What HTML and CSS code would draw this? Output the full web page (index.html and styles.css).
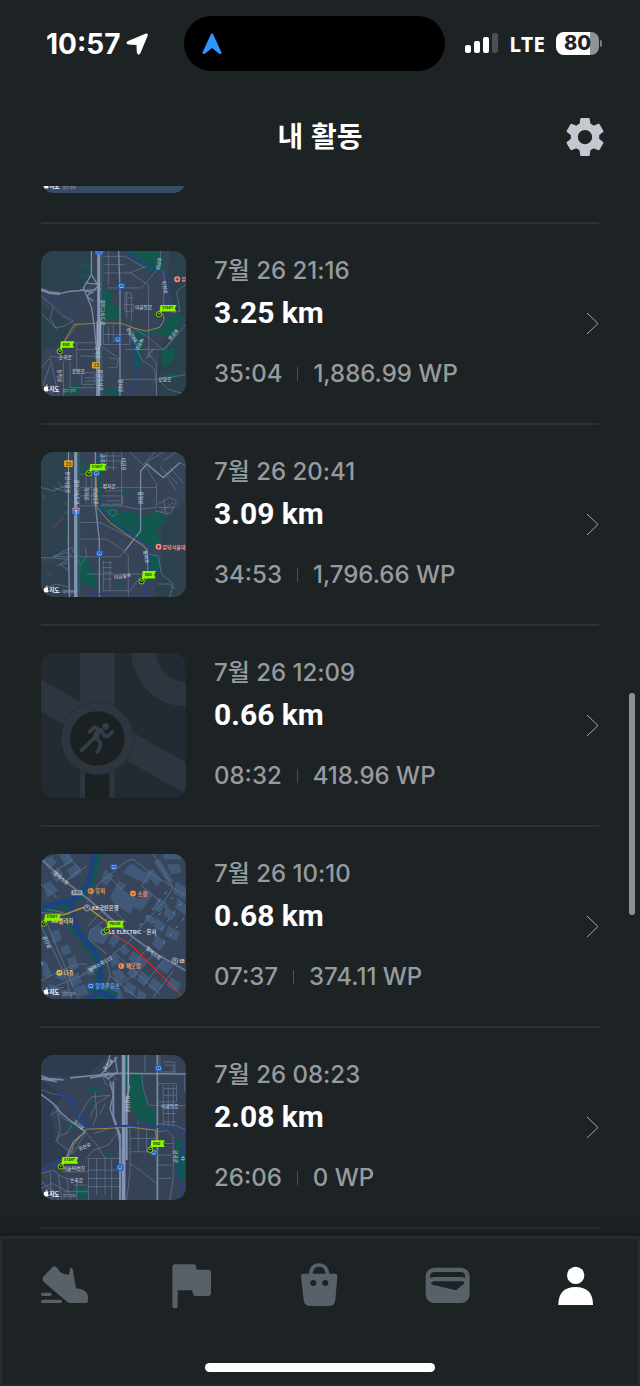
FILE: index.html
```html
<!DOCTYPE html>
<html lang="ko">
<head>
<meta charset="utf-8">
<meta name="viewport" content="width=device-width, initial-scale=1">
<title>내 활동</title>
<link rel="stylesheet" href="styles.css">
</head>
<body>
<svg class="sprites" aria-hidden="true">
  <defs>
    <g id="pin">
      <path d="M5-28H53L48-18 52-8H10L0 2Z" fill="#8cf500"/>
      <circle r="8" fill="#14200e" stroke="#7fe000" stroke-width="3"/>
      <path d="M-3-4L0 1 5-4" fill="none" stroke="#8cf500" stroke-width="3"/>
    </g>
    <g id="station">
      <rect x="-11" y="-10" width="22" height="20" rx="6" fill="#2458ae"/>
      <rect x="-7" y="-6" width="14" height="12" rx="4" fill="#78b2ff"/>
      <path d="M-3 3V-2H3V3" fill="none" stroke="#173a78" stroke-width="3"/>
    </g>
    <g id="maplogo">
      <path d="M0-6C4-8 9-7 10-4 7-2 8 2 11 3 9 8 7 9 4 8 1 9-2 8-4 3-5-2-3-6 0-6ZM3-8C3-11 5-12 7-13 7-10 6-8 3-8Z" fill="#fff"/>
      <text class="map-brand" x="12" y="8">지도</text>
      <text class="map-legal" x="53" y="9">법적 정보</text>
    </g>
  </defs>
</svg>

<div class="screen">
  <div class="status">
    <div class="status-left">
      <span class="clock">10:57</span>
      <svg class="location" viewBox="0 0 22 22"><path d="M20 .5Q22.500 0 21.500 3L14.500 20Q12.500 23.500 10.800 19.500L10.500 12 2.500 11.500Q-1.500 10 2 8Z" fill="#fff"/></svg>
    </div>
    <div class="island">
      <svg class="nav-arrow" viewBox="0 0 20 22"><path d="M9 1Q10-.5 11 1L19.500 19.500Q19.500 21.500 17.500 21L10 15 2.500 21Q.5 21.500.5 19.500Z" fill="#2f95ff"/></svg>
    </div>
    <div class="status-right">
      <svg class="signal" viewBox="0 0 33 21"><g fill="#fff"><rect y="12" width="6" height="8" rx="2"/><rect x="9" y="8" width="6" height="12" rx="2"/><rect x="18" y="4" width="6" height="16" rx="2"/></g><rect x="27" width="6" height="20" rx="2" fill="#4b4f51"/></svg>
      <span class="carrier">LTE</span>
      <span class="battery"><span class="battery-body">80</span><span class="battery-tip"></span></span>
    </div>
  </div>

  <header class="header">
    <h1 class="title">내 활동</h1>
    <button class="settings" type="button" aria-label="설정">
      <svg viewBox="2.400 2.400 19.200 19.200"><path fill="#c5c8d0" d="M19.140 12.940c.04-.3.06-.61.06-.94 0-.32-.02-.64-.07-.94l2.030-1.580c.18-.14.23-.41.12-.61l-1.920-3.320c-.12-.22-.37-.29-.59-.22l-2.390.96c-.5-.38-1.030-.7-1.620-.94l-.36-2.540c-.04-.24-.24-.41-.48-.41h-3.840c-.24 0-.43.17-.47.41l-.36 2.540c-.59.24-1.130.57-1.620.94l-2.390-.96c-.22-.08-.47 0-.59.22L2.740 8.870c-.12.21-.08.47.12.61l2.030 1.580c-.05.3-.09.63-.09.94s.02.64.07.94l-2.030 1.580c-.18.14-.23.41-.12.61l1.920 3.320c.12.22.37.29.59.22l2.390-.96c.5.38 1.030.7 1.620.94l.36 2.540c.05.24.24.41.48.41h3.840c.24 0 .44-.17.47-.41l.36-2.540c.59-.24 1.130-.56 1.620-.94l2.390.96c.22.08.47 0 .59-.22l1.920-3.320c.12-.22.07-.47-.12-.61l-2.010-1.580zM12 15.600c-1.980 0-3.600-1.620-3.600-3.600s1.620-3.600 3.600-3.600 3.600 1.620 3.600 3.600-1.620 3.600-3.600 3.600z"/></svg>
    </button>
  </header>

  <main class="feed">
    <div class="previous">
      <svg class="thumb" viewBox="33 29 435 436"><rect x="33" y="29" width="435" height="436" fill="#384b65"/><use href="#maplogo" x="45" y="443"/></svg>
    </div>
    <ul class="list">
      <li class="row"><a class="activity" href="#run-1">
        <svg class="thumb" viewBox="33 29 435 436" role="img" aria-label="경로 지도">
          <rect x="33" y="29" width="435" height="436" fill="#374356"/>
          <path fill="#2b414d" d="M33 29H180L190 120 150 145 85 150 33 135ZM33 190L75 215 130 255 90 310 33 330ZM420 29H468V230L440 220 410 130ZM395 300L468 250V465H370Z"/>
          <g fill="#12584f">
            <path d="M285 29H400L405 85 365 95 320 60ZM220 145L240 150 245 185 268 200V238H222ZM305 270L350 265 400 258 412 230 440 220 465 230 430 280 400 285 380 275 340 285 330 380 312 385ZM395 330L432 320 438 345 410 380 395 370ZM115 432H155L145 460H100ZM235 440L260 445V465H225ZM400 400L440 395 440 410H400Z"/>
            <path d="M140 70L170 62 185 75 178 90 150 82ZM145 98L180 95 185 112 150 112Z" opacity=".6"/>
          </g>
          <g fill="none" stroke="#24418a" stroke-width="5">
            <path d="M285 29L330 60 400 95 418 110 412 180 405 240 370 262 325 290 312 310 325 400 300 465"/>
            <path d="M60 175L100 190 125 210 135 240" stroke-width="3"/>
          </g>
          <g class="roads">
            <path d="M220 95H300L355 130 357 340 380 365V465M218 45H285L345 80M220 70H285M235 29V130M300 95L350 75M230 140H335L390 75 392 29M400 90L405 130 400 190 430 215 450 210 440 150 468 130M33 165L70 195 100 225 130 240 100 255 75 260 33 215M70 195L60 230 80 265M140 250L105 300 140 305V400M140 305H195M60 345L95 350 130 345M33 380L60 350 85 465M60 370L40 430 70 465M140 325H195M150 345H195M160 395H195V430H155V400M165 410H195M165 420H195M100 360V465M120 360V440H195M215 315L270 355M220 250V310H300V250M235 255V305M250 250V305M218 280H300M285 325H405L468 250M320 325L335 355 375 385 380 465M270 415H330L390 415 468 400M310 270L320 320M300 255L350 285 400 325 440 280M290 150V230M290 170H310M282 190H310V210H285V155H305V240M350 345L370 325 350 350 365 345M385 415L415 445 468 460M235 350L265 355 260 380H235"/>
          </g>
          <g class="roads wide">
            <path d="M184 29V100L160 140 185 200 193 260 200 330V465M184 100L215 150M150 145L190 155M165 125L210 130 170 165 190 180"/>
            <path d="M266 29L270 150V465"/>
            <path d="M33 145L60 155 90 157" stroke-width="8"/><path d="M90 157L120 150 200 145"/>
          </g>
          <path d="M215 29V465" fill="none" stroke="#236255" stroke-width="5"/>
          <path d="M206 29V465" fill="none" stroke="#8295b4" stroke-width="9"/>
          <path d="M202 240V315M211 240V315" stroke="#95a5c2" stroke-width="5"/>
          <path class="route" d="M90 330L108 290 132 250 205 246H272L310 260 350 270 390 258 403 235 400 220 387 218"/>
          <g class="map-label">
            <text transform="translate(212 175) rotate(90)">경부고속도로</text><text transform="translate(206 385) rotate(90)">분당수서로</text>
            <text transform="translate(198 315) rotate(90)">정자로</text><text x="315" y="203">미금일로</text><text transform="translate(288 262) rotate(60)">성남대로</text>
            <text transform="translate(332 290) rotate(115)">백현로</text><text transform="translate(396 120) rotate(80)">탄천로</text><text transform="translate(422 298) rotate(-50)">판교로</text>
            <text x="126" y="397">운전로</text><text x="86" y="353">손곡로</text><text transform="translate(84 385) rotate(90)">동막로</text><text transform="translate(268 415) rotate(90)">장미로</text><text x="386" y="420">분당로</text><text transform="translate(388 88) rotate(-80)">성남로</text>
          </g>
          <rect x="195" y="25" width="25" height="15" rx="5" fill="#3775df"/><rect x="186" y="363" width="24" height="19" rx="3" fill="#e0a51d"/><text class="shield dark" x="190" y="378">23</text>
          <use href="#station" x="274" y="134"/><use href="#station" x="264" y="295"/>
          <circle cx="442" cy="114" r="9" fill="#ff8c88"/><path d="M437 114H447M442 109V119" stroke="#8a2430" stroke-width="3"/><text class="poi red" x="455" y="120">분</text>
          <use href="#pin" x="387" y="219"/><text class="pin-text" x="397" y="203">START</text>
          <g transform="translate(89 331)"><path d="M3-31H44L39-21 43-11H8L0 2Z" fill="#8cf500"/><circle r="8" fill="#14200e" stroke="#7fe000" stroke-width="3"/><path d="M-3-4L0 1 5-4" fill="none" stroke="#8cf500" stroke-width="3"/></g><text class="pin-text" x="98" y="314">END</text>
          <use href="#maplogo" x="45" y="443"/>
        </svg>
        <div class="info"><p class="date">7월 26 21:16</p><h2 class="distance">3.25 km</h2><p class="stats"><span>35:04</span><i class="bar"></i><span>1,886.99 WP</span></p></div>
        <svg class="chevron" viewBox="0 0 13 23"><path d="M1 1L12 11.500 1 22"/></svg>
      </a></li>

      <li class="row"><a class="activity" href="#run-2">
        <svg class="thumb" viewBox="33 33 435 436" role="img" aria-label="경로 지도">
          <rect x="33" y="33" width="435" height="436" fill="#374356"/>
          <path fill="#2e414e" d="M33 33H115V340L80 360 33 350ZM395 235L468 180V469H370L395 350ZM33 370L115 360V469H33Z"/>
          <path fill="#345548" d="M33 155L45 170 40 185ZM100 215L115 205V225ZM100 290L115 300V310ZM45 390L65 400 60 410ZM95 180L115 188V198Z"/>
          <g fill="#12584f"><path d="M152 60H168V90H152ZM203 40H216V210H203ZM212 198L250 195 270 215 300 210 350 230 385 205 412 240 378 265 395 300 378 330 355 315 310 290 240 245ZM150 350L170 350 190 400 205 445 170 435 148 410ZM360 340L395 350 390 380 355 430 345 395ZM270 150L290 155 280 165ZM300 148L318 152 310 163ZM255 430L280 432 270 442Z"/></g>
          <g class="roads">
            <path d="M150 140H380M275 33V195M300 33L350 80 380 130V200L330 205 270 195H150M215 60H275M215 80H260M215 45H270M230 33V90M250 33V90M215 165H278V190H215M225 150H275M230 180H275M150 245H210L260 270 340 310 355 340M332 140V270L285 330 270 348H70L110 335 125 345M400 110L360 75 350 60 375 33M400 110L450 65 468 75M355 60L400 33M390 75L440 150M405 90L445 130M420 80L460 125M400 60L440 33M385 190L420 170 440 180 420 220 375 210M400 175L410 225M385 200H435M390 215L430 185M150 295H230L275 325 295 345V469M165 320L170 345 150 375M220 360V450M240 360V450M218 365H245M218 380H245M218 395H245M218 415H245M170 400H340M215 450H300L330 410M355 340L385 345 395 400 430 430 420 469M385 430H420L435 445M33 140L70 150 115 130M70 140L115 155M85 125L105 145M33 350L115 355 90 370 115 390M65 350L125 320 150 375M80 375L115 365V395M50 440L80 430 115 440M85 455L150 450M235 210Q265 200 260 220 240 235 235 210M168 100V190M185 85V190M150 165H200M150 100H170"/>
          </g>
          <g class="roads wide"><path d="M115 33V320L118 469M196 33V190L208 300V469M332 150V90L350 70M345 65L400 110 450 65M332 150V270L285 330"/></g>
          <path d="M148 33V469" fill="none" stroke="#236255" stroke-width="5"/><path d="M137 33V469" fill="none" stroke="#8295b4" stroke-width="10"/>
          <path d="M207 33V195L225 220 300 280 355 315V390L340 469" fill="none" stroke="#24418a" stroke-width="5"/><path d="M33 405L42 435M170 460H240" fill="none" stroke="#24418a" stroke-width="4"/>
          <path class="route" d="M198 98L201 200 240 245 310 295 352 325 354 400 345 420"/>
          <path d="M65 265L100 230" stroke="#5b413f" stroke-width="5"/>
          <g class="map-label"><text transform="translate(109 92) rotate(90)">용인서울로</text><text transform="translate(136 115) rotate(90)">경부고속도로</text><text transform="translate(166 140) rotate(90)">정자로</text><text transform="translate(192 140) rotate(90)">성남대로</text><text transform="translate(213 38) rotate(90)">금곡로</text><text transform="translate(276 50) rotate(90)">미금로</text><text x="218" y="141">정자로</text><text transform="translate(328 152) rotate(90)">불정로</text><text transform="translate(340 330) rotate(80)">돌마로</text><text transform="translate(253 416) rotate(-8)">미금일로</text></g>
          <rect x="102" y="58" width="26" height="20" rx="3" fill="#e0a51d"/><text class="shield dark" x="106" y="74">23</text>
          <path d="M126 203H150V218L138 224 126 218Z" fill="#3b78dc"/><path d="M126 203H150" stroke="#d27378" stroke-width="5"/><text class="shield" x="134" y="219">1</text>
          <use href="#station" x="199" y="97"/><use href="#station" x="208" y="338"/>
          <circle cx="386" cy="318" r="9" fill="#ff8c88"/><path d="M381 318H391M386 313V323" stroke="#8a2430" stroke-width="3"/><text class="poi red" x="398" y="324">분당서울대</text>
          <use href="#pin" x="176" y="97"/><text class="pin-text" x="185" y="82">START</text>
          <g transform="translate(335 422)"><path d="M3-31H43L38-20 42-9H9L0 2Z" fill="#8cf500"/><circle r="8" fill="#14200e" stroke="#7fe000" stroke-width="3"/><path d="M-3-4L0 1 5-4" fill="none" stroke="#8cf500" stroke-width="3"/></g><text class="pin-text" x="345" y="406">END</text>
          <use href="#maplogo" x="45" y="447"/>
        </svg>
        <div class="info"><p class="date">7월 26 20:41</p><h2 class="distance">3.09 km</h2><p class="stats"><span>34:53</span><i class="bar"></i><span>1,796.66 WP</span></p></div>
        <svg class="chevron" viewBox="0 0 13 23"><path d="M1 1L12 11.500 1 22"/></svg>
      </a></li>

      <li class="row"><a class="activity" href="#run-3">
        <svg class="thumb" viewBox="33 30 435 436" role="img" aria-label="지도 없음">
          <rect x="33" y="30" width="435" height="436" fill="#232a32"/>
          <g fill="#2d353f"><path d="M150 30H253V466H150Z"/><path d="M33 110L468 359V454L33 206Z"/><path d="M305 30H380A88 88 0 0 0 468 117V190A163 163 0 0 1 305 30Z"/></g>
          <path d="M165 370H238V466H165Z" fill="#1b2023"/>
          <circle cx="202" cy="287" r="112" fill="#242c34" opacity=".55"/>
          <circle cx="202" cy="287" r="95" fill="#1b2023" stroke="#2d353f" stroke-width="26"/>
          <g fill="none" stroke="#343d48" stroke-width="11" stroke-linecap="round" stroke-linejoin="round"><path d="M179 267L193 253 211 261 199 281 183 295 155 322"/><path d="M213 261L223 279 235 279 247 267M199 285L211 299 210 313 202 327"/><path d="M205 265L195 285" stroke-width="18"/></g><circle cx="227" cy="251" r="10" fill="#343d48"/>
        </svg>
        <div class="info"><p class="date">7월 26 12:09</p><h2 class="distance">0.66 km</h2><p class="stats"><span>08:32</span><i class="bar"></i><span>418.96 WP</span></p></div>
        <svg class="chevron" viewBox="0 0 13 23"><path d="M1 1L12 11.500 1 22"/></svg>
      </a></li>

      <li class="row"><a class="activity" href="#run-4">
        <svg class="thumb" viewBox="33 29 435 436" role="img" aria-label="경로 지도">
          <rect x="33" y="29" width="435" height="436" fill="#37455b"/>
          <g fill="#405979">
            <path d="M40 45L65 35 80 55 55 75ZM85 29H120L130 50 105 65ZM60 85L85 70 100 90 80 115ZM110 75L140 60 155 85 125 105ZM40 120L60 110 85 140 50 160ZM225 75L250 95 230 125 212 110ZM295 65L310 60 365 100 350 120 280 85ZM265 110L290 120 275 140 330 165 350 135 370 150 335 200 310 190 300 210 255 180 240 160ZM345 85L370 75 395 110 380 125ZM370 50L390 45 430 110 415 120ZM410 60H450L455 85 425 90ZM400 29H455V45H400ZM440 110L468 130V170L430 145ZM385 160L410 175 390 205 370 190ZM410 185L440 210 425 230 400 210ZM445 160L468 180V215L435 190ZM350 210L375 220 365 240 345 230ZM380 220L410 245 395 265 370 245ZM415 245L450 265 440 290 405 275ZM380 275L410 290 390 320 365 300ZM180 255L210 245 240 270 220 300 180 290ZM250 265L270 285 250 310 235 295ZM280 300L300 320 285 335 270 320ZM310 320L350 350 330 375 295 345ZM240 335L260 330 270 355 245 370ZM245 380L270 375 290 400 260 420ZM300 370L325 380 315 405 290 390ZM335 380L360 400 345 425 320 410ZM370 400L400 425 380 445 355 430ZM290 410L320 430 310 455 280 440ZM240 430L270 435 280 465H250ZM325 435L350 450 345 465H320ZM45 215H90V235H45ZM60 265L85 255 95 285 70 300ZM90 310L115 300 125 325 100 335ZM110 345L135 335 145 370 120 380ZM80 375L110 390 100 410 75 400ZM110 400L145 385 155 415 125 430ZM135 430L165 420 175 450 145 460ZM165 370L195 360 200 390 175 395ZM35 350L50 355 65 395 40 400ZM55 420L80 425 85 450H60ZM90 440L120 435 125 460H95ZM400 345L430 365 410 390 380 370ZM425 400L455 420 440 445 410 425Z"/>
          </g>
          <g fill="none" stroke="#125653" stroke-width="27"><path d="M33 195L125 170 160 145 182 110 200 29M122 170L118 205 135 255 190 320 208 365 205 465M205 435L260 460"/></g>
          <g fill="none" stroke="#213e86" stroke-width="13"><path d="M33 190L122 168 155 145 178 105 190 29M125 168L125 205 145 265 195 325 210 370V445L255 465M200 450L175 465"/></g>
          <g class="roads streets"><path d="M33 45L110 115 175 165 245 225 310 280 380 330 468 380M33 245L90 360 110 410 125 465M45 225L95 345 145 465M170 175L205 120 290 50 310 45 360 85 430 130 400 175 335 245 300 290M235 95L290 150M175 245L220 195 235 220 180 260 175 285 230 330M240 190L290 235M365 80L335 125 390 170M310 280L275 310 225 350 155 390M230 350L240 390 225 440M260 330L300 370 390 450M240 395L320 460M345 320L315 360M370 330L320 390 250 430M400 350L340 425M430 380L370 460M33 120L80 160M65 85L125 50M100 115L170 65M105 29L150 75 110 110M33 205L120 210M50 195L100 205M33 410L90 380 145 360 170 360M80 425L180 385M33 440L100 430M430 130L468 155M370 29L430 130"/></g>
          <path d="M33 45L110 115 175 165 245 225 310 280 380 330 468 380" fill="none" stroke="#66758d" stroke-width="6"/>
          <path d="M330 245L420 130M350 260L440 145M375 280L460 170M400 300L468 215" stroke="#74839d" stroke-width="3" stroke-dasharray="10 20" fill="none"/>
          <path d="M40 239L70 214 100 212 160 190 180 195 230 232 235 257" fill="none" stroke="#c39328" stroke-width="4"/><path d="M230 258L300 300 455 453" fill="none" stroke="#f02b26" stroke-width="3"/>
          <g class="map-label large"><text transform="translate(68 88) rotate(40)">엘에스로</text><text transform="translate(346 314) rotate(40)">엘에스로</text><text transform="translate(37 277) rotate(68)">공단로</text><text transform="translate(178 385) rotate(-30)">엘에스로115</text></g>
          <rect x="124" y="138" width="33" height="15" rx="2" fill="#a2abb7"/><text class="tiny-dark" x="128" y="149">호계천</text>
          <use href="#station" x="252" y="68"/><use href="#station" x="182" y="426"/><text class="poi blue" x="196" y="432">알뜰주유소</text>
          <circle cx="182" cy="140" r="9" fill="#ee8a46"/><text class="poi orange" x="196" y="147">유피</text><circle cx="309" cy="148" r="9" fill="#ee8a46"/><text class="poi orange" x="323" y="155">소향</text><circle cx="274" cy="366" r="9" fill="#ee8a46"/><text class="poi orange" x="288" y="372">페오람</text>
          <path d="M178 136V144M182 136V144M305 148H313M272 361V370" stroke="#542e24" stroke-width="2"/>
          <circle cx="88" cy="386" r="9" fill="#e2b65d"/><path d="M84 386H91V382" stroke="#5b421c" stroke-width="3" fill="none"/><text class="poi sand" x="101" y="393">더쥬</text><text class="poi sand" x="64" y="236">KK플라자</text>
          <g fill="#343f53" stroke="#d2d6df" stroke-width="2"><circle cx="171" cy="191" r="9"/><circle cx="221" cy="264" r="8"/><circle cx="435" cy="350" r="9"/></g><path d="M166 191H176M168 187H174M430 350H440M432 346H438M432 354H438" stroke="#d2d6df" stroke-width="2"/>
          <text class="poi" x="185" y="198">KB국민은행</text><text class="poi latin" x="236" y="270">LS ELECTRIC - 본사</text><text class="poi" x="448" y="356">IB</text>
          <circle cx="34" cy="358" r="6" fill="#3775df"/>
          <use href="#pin" x="40" y="238"/><text class="pin-text" x="49" y="221">START</text><use href="#pin" x="230" y="258"/><text class="pin-text" x="239" y="242">PAUSE</text>
          <use href="#maplogo" x="45" y="443"/>
        </svg>
        <div class="info"><p class="date">7월 26 10:10</p><h2 class="distance">0.68 km</h2><p class="stats"><span>07:37</span><i class="bar"></i><span>374.11 WP</span></p></div>
        <svg class="chevron" viewBox="0 0 13 23"><path d="M1 1L12 11.500 1 22"/></svg>
      </a></li>

      <li class="row"><a class="activity" href="#run-5">
        <svg class="thumb" viewBox="33 29 435 436" role="img" aria-label="경로 지도">
          <rect x="33" y="29" width="435" height="436" fill="#364357"/>
          <path fill="#2d3d51" d="M33 29H235L180 85 80 95 33 85ZM33 105L100 150 60 200 80 290 115 330 33 365Z"/>
          <g fill="#12584f"><path d="M284 29H296V135H284ZM300 88L335 85 345 150 355 185 380 195V245L330 225 300 190ZM440 275L455 290 465 330V400L450 410 435 380ZM130 430H172V455H130ZM228 330L248 320 245 338ZM170 130L190 122 215 145 200 148ZM178 180L190 165 190 180ZM110 235L122 232 137 250 125 257Z"/></g>
          <g class="roads"><path d="M335 85L340 130 355 180 468 182M345 29V80M380 29V465M400 50H435V85M390 29V80H440M405 60H430V80M385 115H440V170H385M400 120V245M415 120V245M430 120V245M402 130H440M402 150H440M402 205H440M402 230H440M465 90V140M300 245V320H380M325 230V320M350 250V320M300 280H380M385 235L435 240 468 255M385 260L410 255 430 275 430 400 420 465M385 295H430M385 330H425M385 360H425M385 400H425M300 355L330 375 380 415M300 320V385L290 465M175 340V465M200 340V450M225 340V450M245 340V465M175 340H270M175 375H270M175 400H270M175 425H270M165 255L100 220 70 180 33 145M60 210L85 195M80 180L90 250 80 290 130 325 170 255M75 290L90 270 110 265 125 240M165 260L200 300 225 340M180 215L200 175 240 150 185 155 165 180 145 220M195 140L200 210 190 240M210 205L225 175M170 340L190 315 235 300 265 260M190 265L240 250M33 385L70 375 95 395 150 410M60 380L65 465M85 390L95 465M33 430L65 415 115 440M33 410L70 440 85 465M110 400L120 465M95 380H175M130 420H170M100 440H175M140 400V465M215 85L225 115 245 125 240 105 220 95M225 75L260 100 245 110"/></g>
          <g class="roads wide"><path d="M33 92L55 100 100 104M33 100L80 109M120 98L200 90 230 85 250 84 468 86M180 98L230 90 275 84" stroke-width="5"/><path d="M383 29V465M33 148L70 175 95 205 125 230 165 260 130 290 110 335M225 80L240 29M255 35L262 80 235 100 215 85 240 60 262 35M240 110L250 150 240 190 265 265 272 310V465"/></g>
          <path d="M295 29V135" stroke="#94a4bf" stroke-width="5"/><path d="M250 110V215L270 270V465" fill="none" stroke="#7589a9" stroke-width="6"/><path d="M281 29V465" fill="none" stroke="#8295b4" stroke-width="11"/><path d="M298 120L290 170V345" fill="none" stroke="#8295b4" stroke-width="6"/>
          <path d="M33 135L65 145 100 150 125 175 140 210 155 235 175 245 310 242 385 245 430 250 468 265M33 375L90 350M468 285L450 330 447 400 460 450" fill="none" stroke="#24418a" stroke-width="6"/><path d="M33 133L70 147 105 150" stroke="#526052" stroke-width="3" fill="none"/><path d="M82 143L100 137 105 150H82ZM110 155L130 160 135 180 125 185ZM150 205L162 202 168 222 158 220Z" fill="#24418a"/>
          <path class="route" d="M92 364L125 320 130 300 168 252 230 250 300 246 377 255 380 290 361 314"/>
          <g class="map-label"><text transform="translate(288 150) rotate(90)">성남대로</text><text transform="translate(226 76) rotate(-50)">동천로</text><text transform="translate(128 230) rotate(42)">고기로</text><text transform="translate(148 317) rotate(-22)">동천로</text><text x="120" y="411">손곡로</text><text x="98" y="376">서울46번길</text><text x="394" y="187">미금일로</text><text transform="translate(432 315) rotate(90)">금곡로</text><text x="453" y="345">수</text></g>
          <use href="#station" x="386" y="69"/><use href="#station" x="270" y="367"/><use href="#station" x="372" y="322"/>
          <use href="#pin" x="92" y="364"/><text class="pin-text" x="102" y="347">START</text><g transform="translate(361 314)"><path d="M3-29H44L39-19 43-8H9L0 2Z" fill="#8cf500"/><circle r="8" fill="#14200e" stroke="#7fe000" stroke-width="3"/><path d="M-3-4L0 1 5-4" fill="none" stroke="#8cf500" stroke-width="3"/></g><text class="pin-text" x="370" y="299">END</text>
          <use href="#maplogo" x="45" y="446"/>
        </svg>
        <div class="info"><p class="date">7월 26 08:23</p><h2 class="distance">2.08 km</h2><p class="stats"><span>26:06</span><i class="bar"></i><span>0 WP</span></p></div>
        <svg class="chevron" viewBox="0 0 13 23"><path d="M1 1L12 11.500 1 22"/></svg>
      </a></li>
      <li class="row"></li>
    </ul>
  </main>

  <footer class="dock">
    <nav class="tabs" aria-label="메뉴">
      <a href="#run" aria-label="러닝"><svg viewBox="120 126 144 144" fill="#596168"><path d="M130 170L157 142Q165 135 172 144 178 156 187 160 196 165 207 164L210 147Q214 139 218 147L228 205Q243 205 255 213 264 221 264 235V242Q264 249 258 249H211Q206 249 201 245L132 187Q125 180 130 170Z"/><rect x="123" y="218" width="32" height="10" rx="5"/><rect x="123" y="239" width="63" height="10" rx="5"/></svg></a>
      <a href="#challenge" aria-label="챌린지"><svg viewBox="504 126 144 144" fill="#596168"><path d="M517 142Q517 133 526 133H581Q588 133 588 140L590 149H624Q633 149 633 158V219Q633 228 624 228H587Q580 228 579 221L576 211H533V258Q533 265 525 265 517 265 517 258Z"/></svg></a>
      <a href="#shop" aria-label="상점"><svg viewBox="888 126 144 144"><path fill="#596168" fill-rule="evenodd" d="M910 161H927Q929 130 957 130 985 130 988 161H1005Q1012 161 1012 169L1006 240Q1004 258 986 258H930Q913 258 911 240L903 169Q903 161 910 161ZM938 161H977Q974 140 957 140 940 140 938 161ZM940 180A9 9 0 1 0 940 198 9 9 0 0 0 940 180ZM976 180A9 9 0 1 0 976 198 9 9 0 0 0 976 180Z"/></svg></a>
      <a href="#wallet" aria-label="지갑"><svg viewBox="312 126 144 144"><rect x="317" y="143" width="132" height="106" rx="26" fill="#596168"/><g fill="#1d2225"><path d="M330 171Q330 156 345 156H421Q436 156 436 171V174Q431 171 425 171H341Q335 171 330 174Z"/><path d="M341 184H426Q436 185 431 192L410 209Q406 211 401 209L337 194Q327 190 341 184Z"/></g></svg></a>
      <a href="#me" aria-label="내 활동" aria-current="page"><svg viewBox="696 126 144 144" fill="#fff"><circle cx="767" cy="166" r="26"/><path d="M715 255Q715 201 767 201 819 201 819 255Z"/></svg></a>
    </nav>
    <div class="home-indicator"></div>
  </footer>
  <div class="scrollbar"></div>
</div>
</body>
</html>
```
FILE: styles.css
```css
* { box-sizing: border-box; }

body {
  margin: 0;
  background: #1d2225;
  color: #fff;
  font-family: Inter, "Noto Sans CJK KR", sans-serif;
}

h1, h2, p, ul { margin: 0; padding: 0; }
a { color: inherit; text-decoration: none; }
svg { display: block; flex: none; }

.sprites { position: absolute; width: 0; height: 0; }

.screen {
  position: relative;
  display: flex;
  flex-direction: column;
  height: 100vh;
  overflow: hidden;
}

.status {
  display: grid;
  grid-template-columns: 1fr 261px 1fr;
  align-items: center;
  height: 87px;
  padding-right: 11px;
  flex: none;
}
.status-left { display: flex; align-items: center; gap: 6px; padding-left: 46px; }
.clock { font-size: 28px; font-weight: 700; line-height: 32px; }
.location { width: 22px; height: 22px; }
.island {
  display: flex;
  align-items: center;
  height: 55px;
  padding-left: 18px;
  border-radius: 28px;
  background: #000;
}
.nav-arrow { width: 20px; height: 22px; }
.status-right { display: flex; align-items: center; justify-content: flex-end; padding-right: 27px; }
.signal { width: 33px; height: 21px; }
.carrier { margin: 0 11px; font: 700 21px/28px "Open Sans", sans-serif; }
.battery { display: flex; align-items: center; gap: 1px; }
.battery-body {
  width: 43px;
  border-radius: 8px;
  background: linear-gradient(90deg, #fff 80%, #909394 80%);
  color: #1d2225;
  font-size: 20px;
  font-weight: 800;
  line-height: 23px;
  text-align: center;
}
.battery-tip { width: 2px; height: 7px; border-radius: 0 2px 2px 0; background: #7b7f81; }

.header {
  display: grid;
  grid-template-columns: 1fr auto 1fr;
  align-items: center;
  height: 99px;
  padding: 0 36px;
  flex: none;
}
.title { grid-column: 2; padding-bottom: 4px; font: 700 28px/40px "Noto Sans CJK KR", sans-serif; }
.settings { justify-self: end; padding: 0; border: 0; background: none; }
.settings svg { width: 38px; height: 38px; }

.feed { flex: 1; min-height: 0; overflow: hidden; padding: 0 41px; }
.previous { display: flex; align-items: flex-end; height: 7px; margin-bottom: 29px; overflow: hidden; }
.list { list-style: none; }
.row { border-top: 2px solid #2a3138; }
.activity { display: flex; align-items: center; padding: 27px 0; }
.thumb { width: 145px; height: 145px; border-radius: 13px; }
.info { flex: 1; height: 145px; padding: 5px 0 0 28px; color: #979b9f; }
.date { font-size: 24px; font-weight: 500; line-height: 30px; }
.distance { margin-top: 7px; color: #fff; font: 700 30px/40px Roboto, sans-serif; }
.stats { display: flex; align-items: center; gap: 15px; margin-top: 26px; font-size: 24px; font-weight: 500; line-height: 30px; }
.bar { width: 1px; height: 14px; background: #4b5054; }
.chevron { width: 13px; height: 23px; fill: none; stroke: #a3a6a8; }

.roads { fill: none; stroke: #697a95; stroke-width: 2; }
.roads.wide { stroke: #7889a4; stroke-width: 4; }
.roads.streets { stroke: #5d6c83; stroke-width: 3; }
.route { fill: none; stroke: #a68236; stroke-width: 3; }
.map-label { fill: #bdc7da; font: 500 14px "Noto Sans CJK KR", sans-serif; }
.map-label.large { font-size: 15px; }
.map-brand { fill: #fff; font: 700 17px "Noto Sans CJK KR", sans-serif; }
.map-legal { fill: #a8b1c0; font: 400 10px "Noto Sans CJK KR", sans-serif; }
.pin-text { fill: #27420c; font: 700 10px Inter, sans-serif; }
.shield { fill: #fff; font: 700 14px Inter, sans-serif; }
.shield.dark { fill: #55400f; }
.tiny-dark { fill: #354055; font: 700 9px "Noto Sans CJK KR", sans-serif; }
.poi { fill: #d2d6df; font: 700 16px "Noto Sans CJK KR", sans-serif; }
.poi.red { fill: #ff8c88; font-size: 15px; }
.poi.blue { fill: #67a5ed; }
.poi.orange { fill: #f39a5b; }
.poi.sand { fill: #e5c58a; }
.poi.latin { font-size: 16px; }

.dock {
  flex: none;
  height: 150px;
  padding-top: 26px;
  box-shadow: inset 0 3px #252b33, inset 0 0 0 2px #252b33, 0 -2px 10px #15191b;
}
.tabs { display: grid; grid-template-columns: repeat(5, 1fr); justify-items: center; }
.tabs svg { width: 48px; height: 48px; }
.home-indicator { width: 36%; height: 9px; margin: 53px auto 0; border-radius: 5px; background: #fff; }

.scrollbar {
  position: absolute;
  top: 50%;
  right: 5px;
  width: 6px;
  height: 16%;
  border-radius: 3px;
  background: #8f9192;
}
```
